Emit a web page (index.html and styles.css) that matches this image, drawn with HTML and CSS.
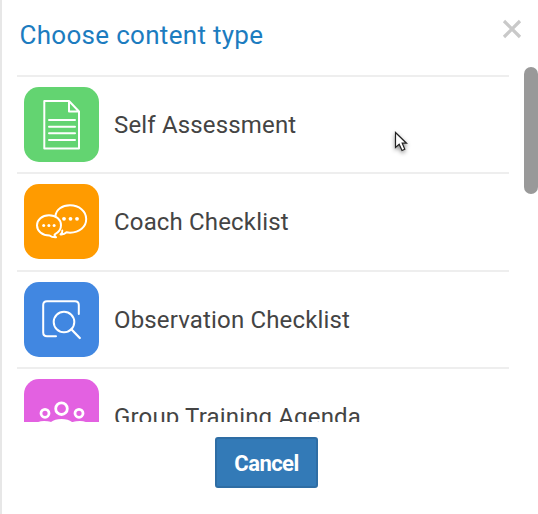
FILE: index.html
```
<!DOCTYPE html>
<html lang="en">
<head>
<meta charset="utf-8">
<title>Choose content type</title>
<link rel="stylesheet" href="styles.css">
</head>
<body>
<main class="dialog">
  <header class="header">
    <h1 class="title">Choose content type</h1>
    <button class="close" aria-label="Close">
      <svg width="20" height="20" viewBox="0 0 20 20"><path d="M2 2L18 18M18 2L2 18"/></svg>
    </button>
  </header>
  <ul class="list">
    <li class="item">
      <svg class="icon green" viewBox="0 0 75 75">
        <path stroke-width="2" d="M20.3 14H45L55 24.5V61.5H20.3ZM45 14V24.5H55"/>
        <path stroke-width="2" d="M25 33H51M25 39.7H51M25 46.3H51M25 53H51"/>
      </svg>
      <span class="label">Self Assessment</span>
    </li>
    <li class="item">
      <svg class="icon orange" viewBox="0 0 75 75">
        <path stroke-width="2" d="M31.5 32C32 25.500 38 21.300 46 21.300C55 21.300 62.200 27 62.200 35C62.200 43 55.500 48.700 46 48.700Q44 48.700 42.500 48.300Q40 50.800 36.500 50.400Q38.800 48.500 38.300 46.500"/>
        <path stroke-width="2" d="M25 31.200C18 31.200 13 35.800 13 41.300C13 47 18 51.500 25.500 51.500Q28 53.500 32 53.300Q30 51.700 30.800 50.300C34.500 48.500 37 45 37 41.300C37 35.600 32 31.200 25 31.200Z"/>
        <g class="dots"><circle cx="19.700" cy="41.500" r="1.500"/><circle cx="24.900" cy="41.500" r="1.500"/><circle cx="30.100" cy="41.500" r="1.500"/><circle cx="40" cy="34.800" r="1.900"/><circle cx="46.500" cy="34.800" r="1.900"/><circle cx="53" cy="34.800" r="1.900"/></g>
      </svg>
      <span class="label">Coach Checklist</span>
    </li>
    <li class="item">
      <svg class="icon blue" viewBox="0 0 75 75">
        <path stroke-width="2" d="M32 54.300H23Q19.200 54.300 19.200 50.500V23Q19.200 19.200 23 19.200H51Q54.800 19.200 54.800 23V32"/>
        <circle cx="40" cy="40" r="10.300" stroke-width="2"/>
        <path stroke-width="2.300" d="M47.300 47.300L55.800 56"/>
      </svg>
      <span class="label">Observation Checklist</span>
    </li>
    <li class="item">
      <svg class="icon pink" viewBox="0 0 75 75">
        <g stroke-width="2.800"><circle cx="37.500" cy="29.700" r="5.800"/><circle cx="21" cy="34.300" r="4"/><circle cx="55" cy="34.300" r="4"/><path d="M24 54Q24 41.500 37.500 41.500T51 54M11 50Q12 43.300 20 43.300Q24 43.300 26 44M50 44Q52 43.300 56 43.300Q64 43.300 65 50"/></g>
      </svg>
      <span class="label">Group Training Agenda</span>
    </li>
  </ul>
  <footer class="footer"><button class="cancel">Cancel</button></footer>
  <div class="scrollbar"></div>
  <svg class="cursor" width="24" height="30" viewBox="0 0 24 30"><path d="M3.500 3.500V18.500L7.200 15.200L10 21.500L12.800 20.200L10.200 14.200H14.500Z"/></svg>
</main>
</body>
</html>
```
FILE: styles.css
```
* { box-sizing: border-box; }
body { margin: 0; background: #fff; font-family: Roboto, sans-serif; }
.dialog {
  position: relative;
  height: 514px;
  padding-left: 15px;
  border-left: 2px solid #e7e7e7;
  overflow: hidden;
}
.header { display: flex; justify-content: space-between; height: 75px; padding: 19px 16px 0 2.500px; }
.title { margin: 0; font-size: 26px; line-height: 33px; font-weight: 400; letter-spacing: 0.300px; color: #1c7cbf; white-space: nowrap; }
.close { width: 20px; height: 20px; padding: 0; border: 0; background: none; }
.close svg { display: block; fill: none; stroke: #c9c9c9; stroke-width: 3.200; }
.list { width: 492px; height: 347px; margin: 0; padding: 0; list-style: none; overflow: hidden; }
.item { display: flex; align-items: flex-start; gap: 15px; height: 97px; padding: 10px 0 0 7px; border-top: 2px solid #eee; }
.item:nth-child(even) { height: 98px; }
.icon { flex: none; width: 75px; height: 75px; border-radius: 15px; fill: none; stroke: #fff; stroke-linecap: round; stroke-linejoin: round; }
.green { background: #63d471; }
.orange { background: #ff9b00; }
.blue { background: #4187e1; }
.pink { background: #e361e1; }
.dots { fill: #fff; stroke: none; }
.label { font-size: 24px; line-height: 77px; color: #444; letter-spacing: 0.160px; white-space: nowrap; }
.footer { width: 499px; padding-top: 15px; display: flex; justify-content: center; }
.cancel { width: 103px; height: 51px; padding: 2px 0 0; border: 2px solid #2e6da4; border-radius: 3px; background: #337ab7; color: #fff; font: 700 22px/28px Roboto, sans-serif; letter-spacing: -0.550px; }
.scrollbar { position: absolute; right: 0; top: 67px; width: 14px; height: 127px; border-radius: 7px; background: #999; }
.cursor { position: absolute; left: 390px; top: 129px; fill: #fff; stroke: #222; stroke-width: 1.200; filter: drop-shadow(0 2px 2px rgba(0,0,0,.45)); }
```
